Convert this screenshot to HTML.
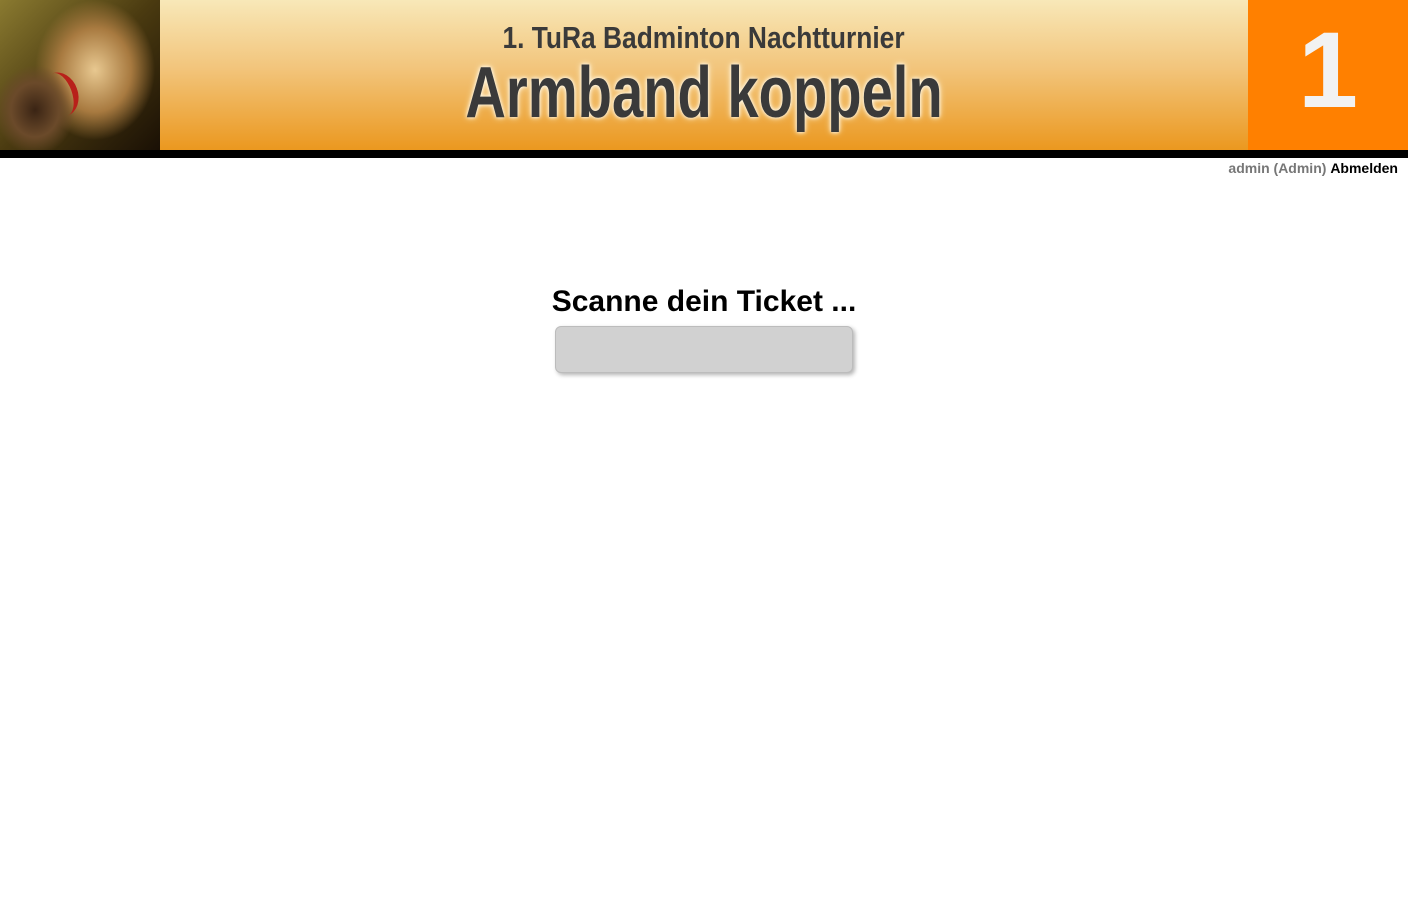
<!DOCTYPE html>
<html><head><style>
body{margin:0;width:1408px;height:904px;background:#fff;font-family:"Liberation Sans",sans-serif;position:relative;overflow:hidden}
#hdr{position:absolute;left:0;top:0;width:1408px;height:150px;background:linear-gradient(#f8e8b8,#f2c57c 45%,#eb981f)}
#pic{position:absolute;left:0;top:0;width:160px;height:150px;background:radial-gradient(ellipse 40px 45px at 35px 110px,#3a2414 0,#6b4a2a 60%,transparent 100%),radial-gradient(ellipse 60px 70px at 95px 70px,#e8c890,#a87a40 60%,transparent 100%),linear-gradient(135deg,#8a7a30,#4a3a10 50%,#1a1005)}
#pic:after{content:"";position:absolute;left:42px;top:72px;width:30px;height:45px;border-right:6px solid #b8201a;border-radius:50%;transform:rotate(-20deg)}
#num{position:absolute;left:1248px;top:0;width:160px;height:150px;background:#ff8000;color:#f2f2f2;font:bold 108px "Liberation Sans",sans-serif;text-align:center;line-height:140px}
#bar{position:absolute;left:0;top:150px;width:1408px;height:8px;background:#000}
.t{position:absolute;left:160px;width:1088px;text-align:center;color:#3a3a3a;font-weight:bold;white-space:nowrap}
.t span{display:inline-block}
#t1{top:20px;font-size:31px}
#t1 span{transform:scaleX(0.85)}
#t2{top:52px;font-size:72px}
#t2 span{transform:scaleX(0.78);text-shadow:0 0 8px #fff8e0,0 0 4px #fff}
#user{position:absolute;right:10px;top:160px;font-size:14px;font-weight:bold;color:#777}
#user b{color:#000}
h1{position:absolute;left:0;width:1408px;top:285px;margin:0;text-align:center;font-size:30px;font-weight:bold}
#inp{position:absolute;left:555px;top:326px;width:296px;height:45px;background:#d1d1d1;border:1px solid #bcbcbc;border-radius:6px;box-shadow:2px 2px 4px rgba(0,0,0,.3)}
</style></head><body>
<div id="hdr"></div>
<div id="pic"></div>
<div class="t" id="t1"><span>1. TuRa Badminton Nachtturnier</span></div>
<div class="t" id="t2"><span>Armband koppeln</span></div>
<div id="num">1</div>
<div id="bar"></div>
<div id="user">admin (Admin) <b>Abmelden</b></div>
<h1>Scanne dein Ticket ...</h1>
<div id="inp"></div>
</body></html>
